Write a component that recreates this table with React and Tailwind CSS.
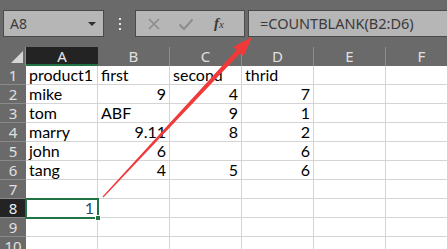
import React from 'react';

const COLS = ['A', 'B', 'C', 'D', 'E', 'F'];

// sheet contents; numbers are right aligned like Excel does
const ROWS = [
  ['product1', 'first', 'second', 'thrid', '', ''],
  ['mike', 9, 4, 7, '', ''],
  ['tom', 'ABF', 9, 1, '', ''],
  ['marry', 9.11, 8, 2, '', ''],
  ['john', 6, '', 6, '', ''],
  ['tang', 4, 5, 6, '', ''],
  ['', '', '', '', '', ''],
  [1, '', '', '', '', ''],
  ['', '', '', '', '', ''],
  ['', '', '', '', '', ''],
];

const cellFont = { fontFamily: 'Lato, "Open Sans", sans-serif' };

function Toolbar() {
  return (
    <div className="h-[47px] bg-[#6a6a6a] flex items-start pt-[10px] pl-[3px]" style={{ fontFamily: '"Noto Sans", "Open Sans", sans-serif' }}>
      {/* name box */}
      <div className="w-[101px] h-[27px] bg-[#b6b6b6] border border-[#4a4a4a] flex items-center justify-between pl-[6px] pr-[7px]">
        <span className="text-[14px] text-[#3a3a3a] leading-none">A8</span>
        <span className="w-0 h-0 border-l-[4px] border-r-[4px] border-t-[4px] border-l-transparent border-r-transparent border-t-[#2e2e2e]" />
      </div>
      {/* drag handle */}
      <div className="w-[31px] h-[27px] flex flex-col items-center justify-center gap-[3px]">
        <span className="w-[2px] h-[2px] bg-[#e8e8e8]" />
        <span className="w-[2px] h-[2px] bg-[#e8e8e8]" />
        <span className="w-[2px] h-[2px] bg-[#e8e8e8]" />
      </div>
      {/* cancel / enter / function buttons */}
      <div className="w-[110px] h-[27px] bg-[#b6b6b6] border border-[#4a4a4a] flex items-center pl-[11px] gap-[17px]">
        <svg width="14" height="14" viewBox="0 0 14 14">
          <path d="M2 2 L12 12 M12 2 L2 12" stroke="#8c8c8c" strokeWidth="1.6" fill="none" />
        </svg>
        <svg width="16" height="14" viewBox="0 0 16 14">
          <path d="M1.5 7.5 L6 12 L14.5 2.5" stroke="#8c8c8c" strokeWidth="2" fill="none" />
        </svg>
        <span className="text-[15px] italic text-[#3a3a3a] leading-none ml-[3px]" style={{ fontFamily: '"Liberation Serif", serif' }}>
          <span className="font-bold">f</span><span className="text-[11px]">x</span>
        </span>
      </div>
      {/* formula input */}
      <div className="ml-[3px] flex-1 h-[27px] bg-[#b6b6b6] border border-[#4a4a4a] border-r-0 flex items-center pl-[11px]">
        <span className="text-[14.5px] text-[#3a3a3a] leading-none">=COUNTBLANK(B2:D6)</span>
      </div>
    </div>
  );
}

function HeaderRow() {
  return (
    <div className="flex h-[19px]">
      <div className="w-[26px] shrink-0 bg-[#6a6a6a] border-r border-[#8a8a8a] relative">
        <svg className="absolute right-[2px] bottom-[3px]" width="12" height="12" viewBox="0 0 12 12">
          <path d="M12 0 L12 12 L0 12 Z" fill="#d6d6d6" />
        </svg>
      </div>
      {COLS.map((c, i) => (
        <div
          key={c}
          className={
            i === 0
              ? 'w-[72px] shrink-0 bg-[#232323] border-b-2 border-[#217346] text-[#e6e6e6] text-[15px] leading-[18px] text-center'
              : 'w-[72px] shrink-0 bg-[#6a6a6a] border-r border-[#8e8e8e] text-[#e0e0e0] text-[15px] leading-[19px] text-center'
          }
          style={{ fontFamily: '"Noto Sans", sans-serif' }}
        >
          {c}
        </div>
      ))}
      <div className="flex-1 bg-[#6a6a6a]" />
    </div>
  );
}

function Row({ n, cells }) {
  const active = n === 8;
  return (
    <div className="flex h-[19px]">
      <div
        className={`w-[26px] shrink-0 border-b border-[#8a8a8a] text-[15px] leading-[18px] text-center ${active ? 'bg-[#232323] text-[#ececec]' : 'bg-[#6a6a6a] text-[#e0e0e0]'}`}
        style={{ fontFamily: '"Noto Sans", sans-serif' }}
      >
        {n}
      </div>
      {cells.map((v, i) => {
        const isNum = typeof v === 'number';
        const selected = active && i === 0;
        return (
          <div
            key={i}
            className={`w-[72px] shrink-0 bg-white border-r border-b border-[#d4d4d4] flex items-end px-[3px] pb-[1px] text-[16px] leading-none ${isNum ? 'justify-end' : 'justify-start'} ${selected ? 'relative' : ''}`}
            style={cellFont}
          >
            <span className={selected ? 'text-[#1f4e79]' : 'text-black'}>{v === '' ? '' : String(v)}</span>
            {selected && (
              <>
                <span className="absolute -left-[1px] -top-[1px] w-[74px] h-[21px] border-2 border-[#217346]" />
                <span className="absolute -right-[4px] -bottom-[4px] w-[6px] h-[6px] bg-[#217346] border border-white" />
              </>
            )}
          </div>
        );
      })}
      <div className="flex-1 bg-white border-b border-[#d4d4d4]" />
    </div>
  );
}

export default function App() {
  return (
    <div className="relative w-[447px] h-[249px] overflow-hidden bg-white">
      <Toolbar />
      <HeaderRow />
      {ROWS.map((r, i) => (
        <Row key={i} n={i + 1} cells={r} />
      ))}
      {/* annotation arrow pointing at the formula */}
      <svg className="absolute left-0 top-0 pointer-events-none" width="447" height="249" viewBox="0 0 447 249">
        <polygon
          points="102.6,196.6 236.6,49.9 233.3,46.8 252,37 243.5,56.4 240.2,53.3 103.4,197.4"
          fill="#f03a3a"
        />
      </svg>
    </div>
  );
}
